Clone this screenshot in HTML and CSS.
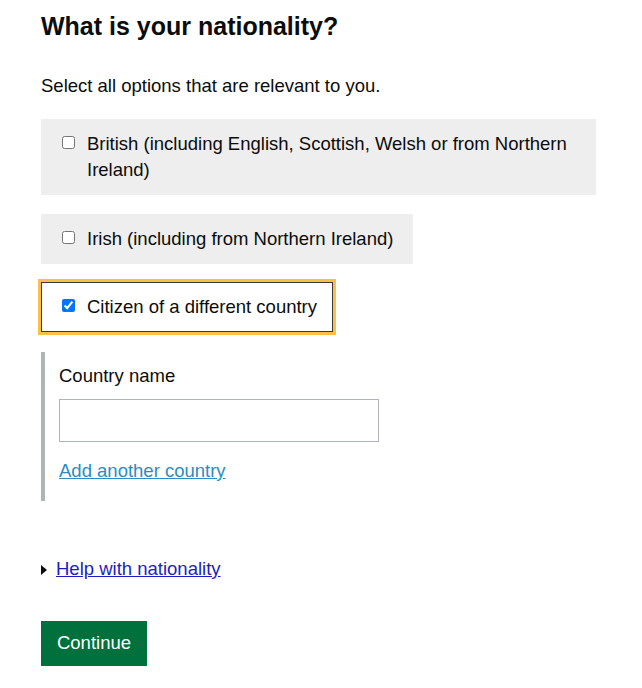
FILE: index.html
```html
<!DOCTYPE html>
<html lang="en">
<head>
<meta charset="utf-8">
<title>What is your nationality?</title>
<link rel="stylesheet" href="styles.css">
</head>
<body>
<main class="page">
  <h1 class="heading">What is your nationality?</h1>
  <p class="hint">Select all options that are relevant to you.</p>

  <div class="options">
    <label class="option option--wide">
      <input type="checkbox" class="check">
      <span class="option-text">British (including English, Scottish, Welsh or from Northern Ireland)</span>
    </label>
    <label class="option">
      <input type="checkbox" class="check">
      <span class="option-text">Irish (including from Northern Ireland)</span>
    </label>
    <label class="option option--selected">
      <input type="checkbox" class="check" checked>
      <span class="option-text">Citizen of a different country</span>
    </label>
  </div>

  <div class="conditional">
    <label class="field-label" for="country">Country name</label>
    <input type="text" id="country" class="text-input">
    <a href="#" class="add-link">Add another country</a>
  </div>

  <details class="help">
    <summary class="help-summary"><span class="help-link">Help with nationality</span></summary>
  </details>

  <button class="button" type="button">Continue</button>
</main>
</body>
</html>
```

FILE: styles.css
```css
html, body {
  margin: 0;
  padding: 0;
  background: #ffffff;
}

body {
  font-family: "Liberation Sans", Arial, sans-serif;
  color: #0b0c0c;
}

.page {
  padding: 11px 41px 0 41px;
  display: flex;
  flex-direction: column;
  align-items: flex-start;
}

.heading {
  font-size: 25px;
  line-height: 30px;
  font-weight: 700;
  margin: 0;
}

.hint {
  font-size: 18.5px;
  line-height: 24px;
  margin: 33px 0 0 0;
}

.options {
  display: flex;
  flex-direction: column;
  align-items: flex-start;
  gap: 20px;
  margin-top: 21px;
  width: 555px;
}

.option {
  display: flex;
  align-items: flex-start;
  gap: 12px;
  background: #eeeeee;
  padding: 12px 20px 12px 21px;
  font-size: 18.5px;
  line-height: 26px;
  box-sizing: border-box;
}

.option--wide {
  width: 555px;
  margin-bottom: -1px;
}

.option--selected {
  background: #ffffff;
  border: 1px solid #3a3a3a;
  outline: 3px solid #ffbf47;
  padding: 11px 15px 11px 20px;
  margin-top: -2px;
}

.check {
  margin: 5px 0 0 0;
  width: 13px;
  height: 13px;
  flex: none;
}

.conditional {
  margin-top: 20px;
  border-left: 4px solid #b1b4b6;
  padding: 12px 0 18px 14px;
  display: flex;
  flex-direction: column;
  align-items: flex-start;
}

.field-label {
  font-size: 18.5px;
  line-height: 24px;
}

.text-input {
  margin-top: 11px;
  width: 320px;
  height: 43px;
  box-sizing: border-box;
  border: 1px solid #b1b4b6;
  font-size: 17px;
  padding: 4px 8px;
}

.add-link {
  margin-top: 17px;
  font-size: 18.5px;
  line-height: 24px;
  color: #2b8cc4;
  text-decoration: underline;
}

.help {
  margin-top: 56px;
  font-size: 18.5px;
  line-height: 24px;
}

.help-summary {
  cursor: pointer;
  list-style: none;
  display: flex;
  align-items: center;
  gap: 9px;
}

.help-summary::-webkit-details-marker {
  display: none;
}

.help-summary::before {
  content: "";
  width: 0;
  height: 0;
  border-left: 6px solid #0b0c0c;
  border-top: 5px solid transparent;
  border-bottom: 5px solid transparent;
  margin-top: 1px;
}

.help-link {
  text-decoration: underline;
  color: #1d1dc4;
}

.button {
  margin-top: 40px;
  background: #00703c;
  color: #ffffff;
  border: none;
  box-shadow: 0 2px 0 #002d18;
  font-family: "Liberation Sans", Arial, sans-serif;
  font-size: 18.5px;
  line-height: 24px;
  padding: 10px 15px 11px 15px;
  width: 106px;
  height: 45px;
  box-sizing: border-box;
}
```
